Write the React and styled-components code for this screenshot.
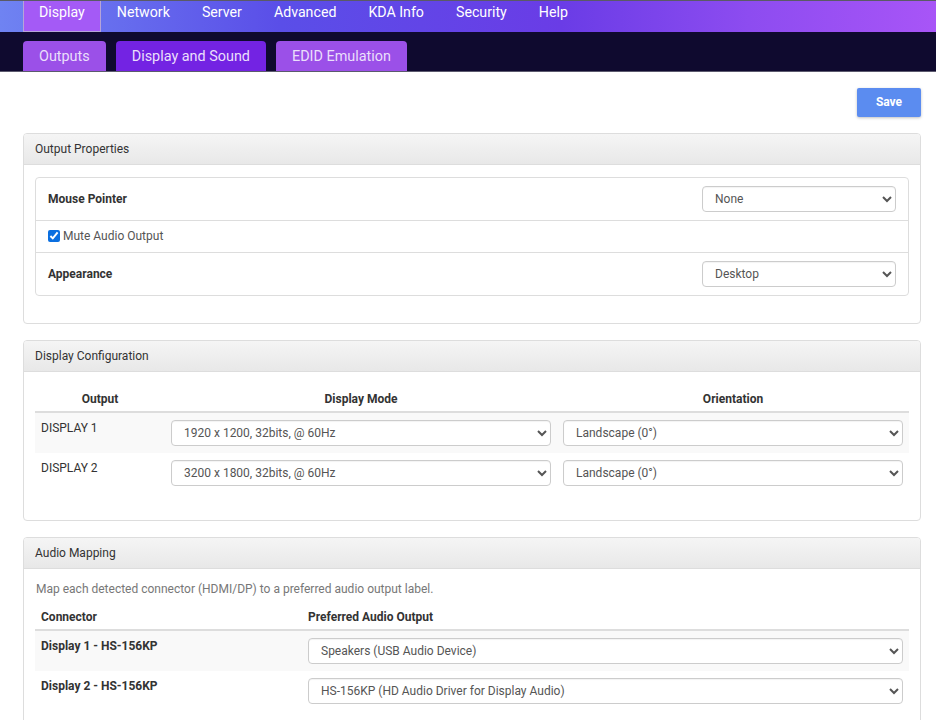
import React from "react";
import styled, { createGlobalStyle } from "styled-components";

const GlobalStyle = createGlobalStyle`
  html, body {
    margin: 0;
    padding: 0;
    background: #fff;
    font-family: Roboto, "Liberation Sans", Arial, sans-serif;
    font-size: 12px;
    color: #333;
  }
  * { box-sizing: border-box; }
`;

const TopBar = styled.nav`
  height: 32px;
  display: flex;
  padding: 0 23px;
  border-top: 1px solid #5a5a66;
  background: linear-gradient(90deg, #6f83f2 0%, #5a4ee8 30%, #6a3ce6 60%, #8d4cf0 80%, #a855f7 100%);
`;

const TopItem = styled.a`
  display: block;
  padding: 2px 16px 0;
  line-height: 18px;
  font-size: 14.2px;
  color: #fff;
  text-decoration: none;
  background: ${({ $active }) => ($active ? "#a45af6" : "transparent")};
  box-shadow: ${({ $active }) => ($active ? "inset 1px 0 #b6a4d8, inset -1px 0 #b6a4d8, inset 0 -1px #b6a4d8" : "none")};
`;

const SubBar = styled.div`
  height: 40px;
  display: flex;
  align-items: flex-end;
  gap: 10px;
  padding: 0 23px;
  background: #0f0a2f;
  border-bottom: 1px solid #5c5a6e;
`;

const SubTab = styled.a`
  height: 30px;
  display: flex;
  align-items: center;
  padding: 0 16px;
  font-size: 14.4px;
  color: #eadffb;
  text-decoration: none;
  border-radius: 4px 4px 0 0;
  background: ${({ $active }) => ($active ? "#7323e3" : "#9b50e8")};
`;

const Content = styled.main`
  padding: 16px 15px 0 23px;
  display: flex;
  flex-direction: column;
  gap: 16px;
`;

const Toolbar = styled.div`
  display: flex;
  justify-content: flex-end;
`;

const SaveButton = styled.button`
  width: 64px;
  height: 29px;
  border: none;
  border-radius: 2px;
  background: #5b8cf0;
  color: #fff;
  font-family: inherit;
  font-weight: 700;
  font-size: 12px;
  padding: 0 0 1px;
  box-shadow: 0 1px 3px rgba(0, 0, 0, 0.25);
`;

const Panel = styled.section`
  border: 1px solid #ddd;
  border-radius: 4px;
  overflow: hidden;
`;

const PanelHeader = styled.div`
  height: 31px;
  display: flex;
  align-items: center;
  padding: 0 11px;
  background: linear-gradient(#f5f5f5, #e8e8e8);
  border-bottom: 1px solid #ddd;
  color: #333;
  font-size: 12px;
`;

const PanelBody = styled.div`
  padding: 12px 11px ${({ $bottom }) => $bottom || 28}px;
`;

const ListBox = styled.div`
  border: 1px solid #ddd;
  border-radius: 4px;
`;

const ListRow = styled.div`
  display: flex;
  align-items: center;
  justify-content: space-between;
  height: ${({ $h }) => $h}px;
  padding: 0 12px;
  border-top: ${({ $first }) => ($first ? "none" : "1px solid #ddd")};
`;

const Label = styled.span`
  font-weight: 700;
  color: #333;
`;

const CheckLabel = styled.label`
  display: flex;
  align-items: center;
  gap: 3px;
  color: #555;
  margin-top: -2px;
`;

const Check = styled.input`
  width: 12px;
  height: 12px;
  margin: 0;
  accent-color: #0b6fe0;
`;

const Select = styled.select`
  width: ${({ $w }) => $w || "100%"};
  height: 26px;
  padding: 0 8px;
  border: 1px solid #ccc;
  border-radius: 4px;
  background: #fff;
  color: #555;
  font-family: inherit;
  font-size: 12px;
  box-shadow: inset 0 1px 1px rgba(0, 0, 0, 0.05);
`;

const Table = styled.table`
  width: 100%;
  border-collapse: collapse;
  table-layout: fixed;
`;

const Th = styled.th`
  padding: 7px 6px 4px;
  height: 28px;
  text-align: ${({ $align }) => $align || "center"};
  font-weight: 700;
  color: #333;
  border-bottom: 2px solid #ddd;
`;

const Tr = styled.tr`
  background: ${({ $striped }) => ($striped ? "#f9f9f9" : "#fff")};
  & + & td { border-top: 1px solid #ddd; }
`;

const Td = styled.td`
  padding: 7px 6px;
  vertical-align: top;
  line-height: 17px;
  color: #333;
  font-weight: ${({ $bold }) => ($bold ? 700 : 400)};
`;

const Hint = styled.p`
  margin: 0 0 4px;
  padding: 0 1px;
  line-height: 17px;
  color: #777;
`;

const navItems = ["Display", "Network", "Server", "Advanced", "KDA Info", "Security", "Help"];
const subTabs = ["Outputs", "Display and Sound", "EDID Emulation"];

const displays = [
  { name: "DISPLAY 1", mode: "1920 x 1200, 32bits, @ 60Hz" },
  { name: "DISPLAY 2", mode: "3200 x 1800, 32bits, @ 60Hz" },
];

const audio = [
  { name: "Display 1 - HS-156KP", out: "Speakers (USB Audio Device)" },
  { name: "Display 2 - HS-156KP", out: "HS-156KP (HD Audio Driver for Display Audio)" },
];

export default function App() {
  return (
    <>
      <GlobalStyle />
      <TopBar>
        {navItems.map((item, i) => (
          <TopItem key={item} $active={i === 0}>{item}</TopItem>
        ))}
      </TopBar>
      <SubBar>
        {subTabs.map((t, i) => (
          <SubTab key={t} $active={i === 1}>{t}</SubTab>
        ))}
      </SubBar>
      <Content>
        <Toolbar>
          <SaveButton>Save</SaveButton>
        </Toolbar>

        <Panel>
          <PanelHeader>Output Properties</PanelHeader>
          <PanelBody $bottom={27}>
            <ListBox>
              <ListRow $h={42} $first>
                <Label>Mouse Pointer</Label>
                <Select $w="194px" defaultValue="None">
                  <option>None</option>
                </Select>
              </ListRow>
              <ListRow $h={32}>
                <CheckLabel>
                  <Check type="checkbox" defaultChecked />
                  Mute Audio Output
                </CheckLabel>
              </ListRow>
              <ListRow $h={43}>
                <Label>Appearance</Label>
                <Select $w="194px" defaultValue="Desktop">
                  <option>Desktop</option>
                </Select>
              </ListRow>
            </ListBox>
          </PanelBody>
        </Panel>

        <Panel>
          <PanelHeader>Display Configuration</PanelHeader>
          <PanelBody $bottom={27}>
            <Table>
              <colgroup>
                <col style={{ width: 130 }} />
                <col style={{ width: 392 }} />
                <col />
              </colgroup>
              <thead>
                <tr>
                  <Th>Output</Th>
                  <Th>Display Mode</Th>
                  <Th>Orientation</Th>
                </tr>
              </thead>
              <tbody>
                {displays.map((d, i) => (
                  <Tr key={d.name} $striped={i % 2 === 0}>
                    <Td>{d.name}</Td>
                    <Td><Select defaultValue={d.mode}><option>{d.mode}</option></Select></Td>
                    <Td><Select defaultValue="Landscape (0°)"><option>Landscape (0°)</option></Select></Td>
                  </Tr>
                ))}
              </tbody>
            </Table>
          </PanelBody>
        </Panel>

        <Panel>
          <PanelHeader>Audio Mapping</PanelHeader>
          <PanelBody $bottom={28}>
            <Hint>Map each detected connector (HDMI/DP) to a preferred audio output label.</Hint>
            <Table>
              <colgroup>
                <col style={{ width: 267 }} />
                <col />
              </colgroup>
              <thead>
                <tr>
                  <Th $align="left">Connector</Th>
                  <Th $align="left">Preferred Audio Output</Th>
                </tr>
              </thead>
              <tbody>
                {audio.map((a, i) => (
                  <Tr key={a.name} $striped={i % 2 === 0}>
                    <Td $bold>{a.name}</Td>
                    <Td><Select defaultValue={a.out}><option>{a.out}</option></Select></Td>
                  </Tr>
                ))}
              </tbody>
            </Table>
          </PanelBody>
        </Panel>
      </Content>
    </>
  );
}
